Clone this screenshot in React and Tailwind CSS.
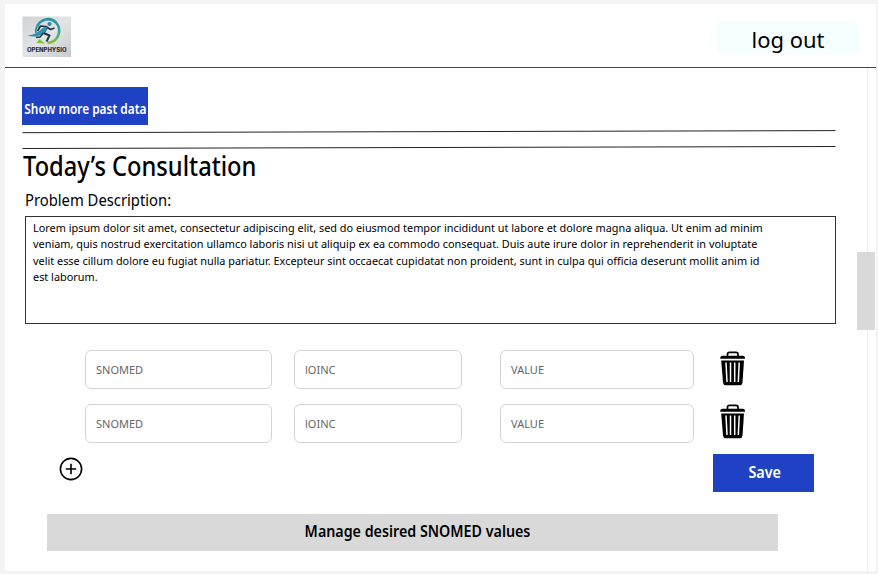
import React from "react";

const paragraph = [
  "Lorem ipsum dolor sit amet, consectetur adipiscing elit, sed do eiusmod tempor incididunt ut labore et dolore magna aliqua. Ut enim ad minim",
  "veniam, quis nostrud exercitation ullamco laboris nisi ut aliquip ex ea commodo consequat. Duis aute irure dolor in reprehenderit in voluptate",
  "velit esse cillum dolore eu fugiat nulla pariatur. Excepteur sint occaecat cupidatat non proident, sunt in culpa qui officia deserunt mollit anim id",
  "est laborum.",
];

function Logo() {
  return (
    <svg className="block h-[41px] w-[49px]" viewBox="0 0 49 41" role="img" aria-label="OpenPhysio">
      <defs>
        <linearGradient id="tile" x1="0" y1="0" x2="1" y2="1">
          <stop offset="0" stopColor="#d0d2d3" />
          <stop offset="0.5" stopColor="#e3e4e5" />
          <stop offset="1" stopColor="#c8cacc" />
        </linearGradient>
        <linearGradient id="ring" x1="0" y1="0" x2="0" y2="1">
          <stop offset="0" stopColor="#2c91a5" />
          <stop offset="0.55" stopColor="#3aa596" />
          <stop offset="1" stopColor="#7fc62e" />
        </linearGradient>
      </defs>
      <rect x="0.500" y="0.500" width="48.500" height="40.500" fill="url(#tile)" />
      <path d="M15 11C18 3 28 0.500 34 6.500C40.500 14 36.500 26 25.500 27" fill="none" stroke="url(#ring)" strokeWidth="2.600" />
      <path d="M14.800 10.500C13.800 13 13.500 15 14 17" fill="none" stroke="#2c8da0" strokeWidth="1.800" />
      <path d="M14.500 27L17.500 23L23 27.500Z" fill="#7fc62e" />
      <circle cx="27.500" cy="8" r="2.100" fill="#278ba3" />
      <path d="M15.500 15L18.500 10L24 10.500L28.500 13.500L32.500 12" fill="none" stroke="#213746" strokeWidth="1.700" strokeLinejoin="round" />
      <path d="M25 12L21.500 17L27.500 19.500L24.500 25.500" fill="none" stroke="#213746" strokeWidth="2" strokeLinejoin="round" />
      <path d="M5 19.500C12 19.500 17 15.500 22.500 10.500L26 12C21.500 19 15 22.500 5 19.500Z" fill="#318fae" />
      <path d="M21.500 17L18 21L14 21.500" fill="none" stroke="#213746" strokeWidth="1.500" />
      <text x="5" y="36" fill="#22313f" fontFamily="Inter, sans-serif" fontWeight="800" fontSize="5.600" textLength="39.500" lengthAdjust="spacingAndGlyphs">OPENPHYSIO</text>
    </svg>
  );
}

function Trash() {
  return (
    <svg className="block h-[35px] w-[26px]" viewBox="0 0 26 35" aria-hidden="true">
      <path d="M7.500 5V3.300Q7.500 1.300 9.500 1.300H16Q18 1.300 18 3.300V5" fill="none" stroke="black" strokeWidth="1.700" />
      <path d="M2.500 4.700H23Q25 4.700 25 7.800H0.200Q0.200 4.700 2.500 4.700Z" fill="black" />
      <path d="M1.200 9.400H24L22.500 31.500Q22.200 34.200 19.800 34.200H5.700Q3.300 34.200 3 31.500Z" fill="black" />
      <path d="M6 11.500L7 31M10.500 11.500V31M14.700 11.500V31M19.200 11.500L18.300 31" fill="none" stroke="white" strokeWidth="1.500" />
    </svg>
  );
}

function Field({ label, className }) {
  return (
    <div className={`flex h-[39px] shrink-0 items-center rounded-md border border-[#d5d5d5] pl-2.5 text-[11px] text-[#666666] ${className}`}>
      {label}
    </div>
  );
}

function CodeRow({ iconClass = "" }) {
  return (
    <div className="flex h-[39px]">
      <Field label="SNOMED" className="w-[187px] pt-px" />
      <Field label="lOINC" className="ml-[22px] w-[168px] pt-px" />
      <Field label="VALUE" className="ml-[38px] w-[194px] pt-px" />
      <div className={`ml-[26px] ${iconClass}`}>
        <Trash />
      </div>
    </div>
  );
}

function Rule({ from, to }) {
  return (
    <svg className="block h-[4px] w-[814px]" viewBox="0 0 814 4" aria-hidden="true">
      <line x1="0.500" y1={from} x2="813.500" y2={to} stroke="#222" strokeWidth="1" />
    </svg>
  );
}

export default function App() {
  return (
    <div className="h-[574px] w-[878px] overflow-hidden bg-[#f4f4f4] pl-[5px] pt-1 font-['Noto_Sans',sans-serif] text-black">
      <div className="flex h-[567px] w-[871px] flex-col bg-white">
        <header className="flex h-16 shrink-0 items-start justify-between border-b border-[#444] pl-[17px] pr-[17px] pt-3">
          <Logo />
          <button className="mt-[5px] h-[33px] w-[142px] rounded bg-[#f5ffff] text-[22.5px] leading-[37px]">
            <span className="block scale-x-[0.975]">log out</span>
          </button>
        </header>
        <div className="flex min-h-0 flex-1">
          <main className="flex w-[852px] flex-col items-start pl-[17px]">
            <button className="mt-[19px] flex h-[38px] w-[126px] items-center justify-center whitespace-nowrap bg-[#1f42c4] pt-[6px] text-[13.5px] font-semibold text-white">
              <span className="block scale-x-[0.88]">Show more past data</span>
            </button>
            <div className="mt-[5px]"><Rule from={2.7} to={0.6} /></div>
            <div className="mt-3"><Rule from={2.5} to={0.5} /></div>
            <h1 className="ml-[0.5px] h-[34px] origin-left scale-x-[0.86] whitespace-nowrap text-[27.5px] font-medium leading-[31px]">
              Today’s Consultation
            </h1>
            <h2 className="ml-[3px] mt-[4px] h-[24px] origin-left scale-x-[0.896] whitespace-nowrap text-[16.5px] leading-[24px]">
              Problem Description:
            </h2>
            <div className="ml-[3px] mt-1 h-[108px] w-[811px] border border-[#333] pl-[7px] pt-[3px] text-[10.88px] leading-[16.4px]">
              {paragraph.map((line) => (
                <p key={line} className="whitespace-nowrap">{line}</p>
              ))}
            </div>
            <div className="ml-[63px] mt-[26px] flex flex-col gap-[15px]">
              <CodeRow iconClass="mt-px" />
              <CodeRow />
            </div>
            <div className="mt-[11px] flex w-[792px] justify-between">
              <svg className="ml-[37px] mt-[3px] block size-6" viewBox="0 0 24 24" fill="none" stroke="black" strokeWidth="1.600" aria-hidden="true">
                <circle cx="12" cy="12" r="10.600" />
                <path d="M12 6.800V17.200M6.800 12H17.200" />
              </svg>
              <button className="flex h-[38px] w-[101px] items-center justify-center bg-[#1f42c4] pb-[2px] pl-[3px] text-[16.5px] font-semibold text-white">
                <span className="block scale-x-[0.87]">Save</span>
              </button>
            </div>
            <button className="ml-[25px] mt-[22px] flex h-[37px] w-[731px] items-center justify-center bg-[#d9d9d9] pb-[3px] pl-[10px] text-[16.5px] font-semibold">
              <span className="block scale-x-[0.865]">Manage desired SNOMED values</span>
            </button>
          </main>
          <aside className="relative flex w-[19px] flex-col">
            <div className="ml-[10px] h-full w-px bg-[#eeeeee]" />
            <div className="absolute left-0 top-[184px] h-[78px] w-[18px] bg-[#d9d9d9]" />
          </aside>
        </div>
      </div>
    </div>
  );
}
